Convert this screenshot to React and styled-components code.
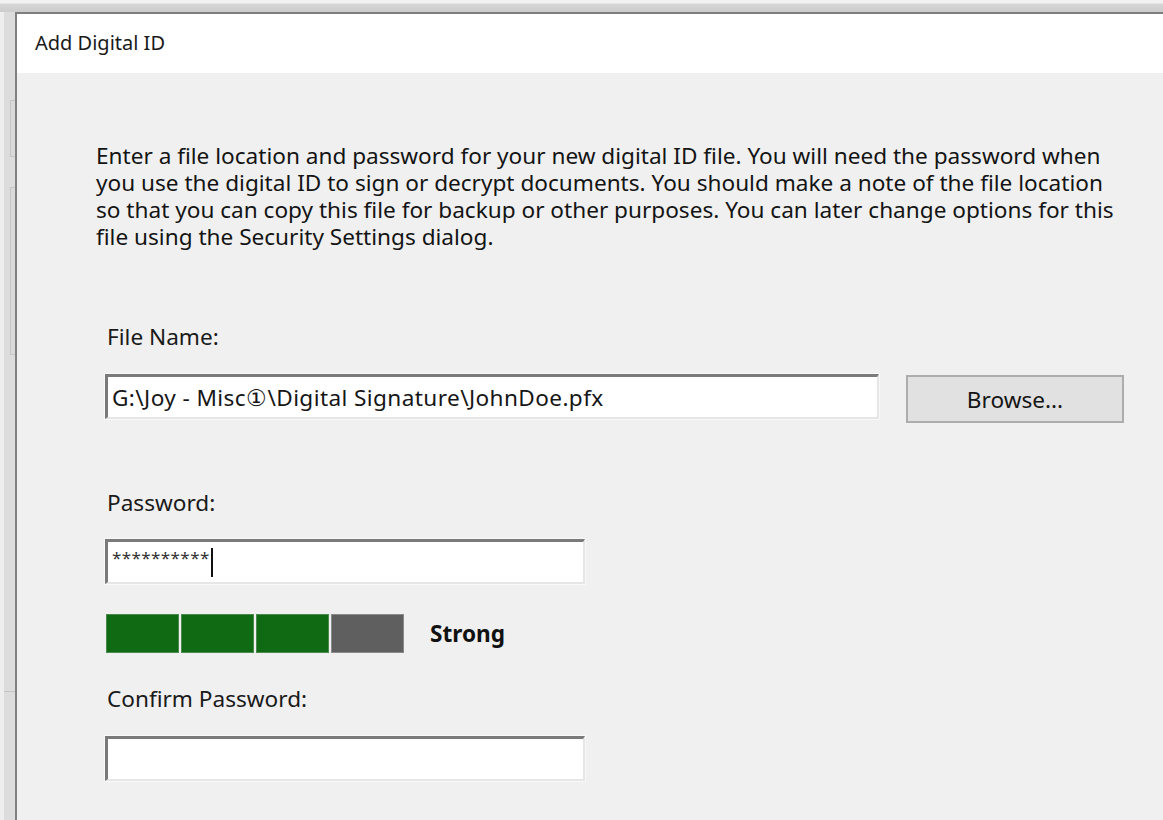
import React from 'react';
import styled, { createGlobalStyle } from 'styled-components';

const GlobalStyle = createGlobalStyle`
  html, body {
    margin: 0;
    padding: 0;
    background: #e4e4e4;
  }
  body {
    font-family: "Noto Sans", "Open Sans", sans-serif;
    color: #111;
  }
`;

const Desktop = styled.div`
  width: 1163px;
  height: 820px;
  overflow: hidden;
  display: flex;
  flex-direction: column;
  background: linear-gradient(to right, #eeeeee 0 4px, #dcdcdc 4px);
`;

const TopEdge = styled.div`
  height: 12px;
  flex-shrink: 0;
  background: linear-gradient(to bottom, #f2f2f2 0 3px, #d6d6d6 4px, #cdcdcd 11px);
`;

const Row = styled.div`
  flex: 1;
  display: flex;
  min-height: 0;
`;

// strip of the window sitting behind the dialog
const BackWindow = styled.div`
  width: 15px;
  flex-shrink: 0;
  display: flex;
  flex-direction: column;
  padding-top: 88px;
  box-sizing: border-box;
`;

const BackPane = styled.div`
  height: ${(p) => p.h}px;
  margin-bottom: ${(p) => p.gap}px;
  margin-left: 10px;
  border: 1px solid #c6c6c6;
  border-right: none;
  background: #d9d9d9;
`;

const BackRule = styled.div`
  margin-top: auto;
  margin-bottom: 128px;
  height: 1px;
  margin-left: 4px;
  background: #c4c4c4;
`;

const Dialog = styled.div`
  flex: 1;
  display: flex;
  flex-direction: column;
  border-top: 2px solid #7d7d7d;
  border-left: 2px solid #808080;
  background: #f0f0f0;
`;

const TitleBar = styled.div`
  height: 59px;
  flex-shrink: 0;
  background: #ffffff;
  display: flex;
  align-items: center;
  padding-left: 18px;
  font-size: 20px;
  color: #1a1a1a;
  padding-bottom: 2px;
  box-sizing: border-box;
`;

const Body = styled.div`
  padding: 69px 0 0 79px;
  display: flex;
  flex-direction: column;
`;

const Intro = styled.div`
  display: flex;
  flex-direction: column;
  font-size: 22.6px;
  color: #141414;
`;

const IntroLine = styled.div`
  height: 27px;
  line-height: 27px;
  white-space: nowrap;
`;

const Label = styled.div`
  font-size: 22.6px;
  line-height: 28px;
  color: #1a1a1a;
  margin-left: 11px;
  margin-top: ${(p) => p.top}px;
`;

const FieldRow = styled.div`
  display: flex;
  align-items: flex-start;
  gap: 27px;
  margin-left: 9px;
  margin-top: ${(p) => p.top}px;
`;

const Field = styled.div`
  width: ${(p) => p.w}px;
  height: 45px;
  box-sizing: border-box;
  background: #ffffff;
  border-top: 3px solid #7a7a7a;
  border-left: 3px solid #7a7a7a;
  border-right: 2px solid #e6e6e6;
  border-bottom: 2px solid #e6e6e6;
  outline: 1px solid #f8f8f8;
  display: flex;
  align-items: center;
  padding-left: 4px;
  font-size: 22.6px;
  letter-spacing: 0.4px;
  color: #161616;
  white-space: nowrap;
  overflow: hidden;
`;

const Masked = styled.span`
  font-size: 17px;
  letter-spacing: 0.4px;
  margin-top: -10px;
  color: #333;
`;

const Caret = styled.span`
  display: inline-block;
  width: 2px;
  height: 29px;
  background: #111;
  margin-left: 1px;
`;

const Button = styled.div`
  width: 218px;
  height: 48px;
  margin-top: 1px;
  box-sizing: border-box;
  background: #e1e1e1;
  border: 2px solid #adadad;
  display: flex;
  align-items: center;
  justify-content: center;
  font-size: 22.6px;
  color: #151515;
`;

const Meter = styled.div`
  display: flex;
  align-items: center;
  margin-left: 10px;
  margin-top: 30px;
`;

const Segment = styled.div`
  width: 73px;
  height: 39px;
  margin-right: 2px;
  box-sizing: border-box;
  background: ${(p) => (p.on ? '#0f6a13' : '#5f5f5f')};
  border: 1px solid ${(p) => (p.on ? '#4a8a4d' : '#8a8a8a')};
`;

const Strength = styled.div`
  margin-left: 24px;
  font-size: 22.6px;
  font-weight: 700;
  color: #111;
`;

const introLines = [
  'Enter a file location and password for your new digital ID file. You will need the password when',
  'you use the digital ID to sign or decrypt documents. You should make a note of the file location',
  'so that you can copy this file for backup or other purposes. You can later change options for this',
  'file using the Security Settings dialog.',
];

export default function App() {
  const levels = [true, true, true, false];
  return (
    <>
      <GlobalStyle />
      <Desktop>
        <TopEdge />
        <Row>
          <BackWindow>
            <BackPane h={55} gap={30} />
            <BackPane h={166} gap={0} />
            <BackRule />
          </BackWindow>
          <Dialog>
            <TitleBar>Add Digital ID</TitleBar>
            <Body>
              <Intro>
                {introLines.map((line, i) => (
                  <IntroLine key={i}>{line}</IntroLine>
                ))}
              </Intro>

              <Label top={73}>File Name:</Label>
              <FieldRow top={23}>
                <Field w={774}>G:\Joy - Misc{'\u2460'}\Digital Signature\JohnDoe.pfx</Field>
                <Button>Browse...</Button>
              </FieldRow>

              <Label top={66}>Password:</Label>
              <FieldRow top={22}>
                <Field w={480}>
                  <Masked>**********</Masked>
                  <Caret />
                </Field>
              </FieldRow>

              <Meter>
                {levels.map((on, i) => (
                  <Segment key={i} on={on} />
                ))}
                <Strength>Strong</Strength>
              </Meter>

              <Label top={32}>Confirm Password:</Label>
              <FieldRow top={23}>
                <Field w={480} />
              </FieldRow>
            </Body>
          </Dialog>
        </Row>
      </Desktop>
    </>
  );
}
